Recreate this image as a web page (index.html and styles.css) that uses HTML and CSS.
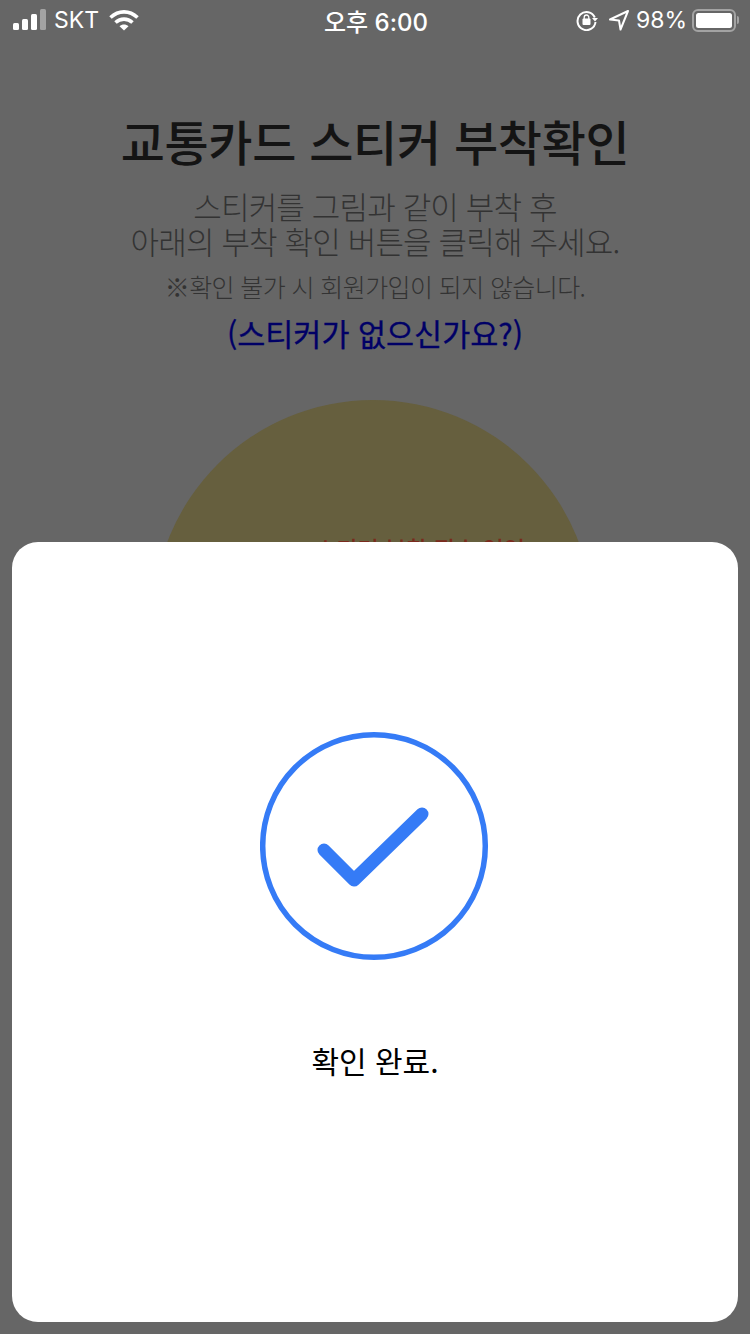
FILE: index.html
```html
<!DOCTYPE html>
<html lang="ko">
<head>
<meta charset="utf-8">
<title>교통카드 스티커 부착확인</title>
<link rel="stylesheet" href="styles.css">
</head>
<body>
<div class="status">
  <div class="status-side">
    <svg class="signal" width="34" height="22" viewBox="0 0 34 22"><rect x="0" y="14" width="6" height="7" rx="1.500" fill="#fff"/><rect x="9" y="10" width="6" height="11" rx="1.500" fill="#fff"/><rect x="18" y="5" width="6" height="16" rx="1.500" fill="#fff"/><rect x="27" y="0" width="6" height="21" rx="1.500" fill="#a3a3a3"/></svg>
    <span class="carrier">SKT</span>
    <svg class="wifi" width="30" height="22" viewBox="0 0 30 22"><path d="M1.500 8.500C9.500 1 20.500 1 28.500 8.500" fill="none" stroke="#fff" stroke-width="3.600"/><path d="M6.500 13.500C11.500 9 18.500 9 23.500 13.500" fill="none" stroke="#fff" stroke-width="3.600"/><path d="M10.500 17.300C13 15 17 15 19.500 17.300L15 21.500Z" fill="#fff"/></svg>
  </div>
  <div class="time">오후 6:00</div>
  <div class="status-side right">
    <svg class="lock" width="22" height="22" viewBox="0 0 22 22"><path d="M18.800 8.500A9 9 0 1 0 19.500 13" fill="none" stroke="#fff" stroke-width="2"/><path d="M16 9h6l-3 3.500z" fill="#fff"/><rect x="6.500" y="9.500" width="8" height="6.500" rx="1" fill="#fff"/><path d="M8.200 10V8.300a2.300 2.300 0 0 1 4.600 0V10" fill="none" stroke="#fff" stroke-width="1.300"/></svg>
    <svg class="loc" width="22" height="22" viewBox="0 0 22 22"><path d="M20 2 2 10.500l9 1 1.500 9z" fill="none" stroke="#fff" stroke-width="2" stroke-linejoin="round"/></svg>
    <span class="pct">98%</span>
    <div class="battery"><div class="battery-fill"></div></div>
    <div class="battery-cap"></div>
  </div>
</div>
<main class="page">
  <h1 class="title">교통카드 스티커 부착확인</h1>
  <p class="lead">스티커를 그림과 같이 부착 후<br>아래의 부착 확인 버튼을 클릭해 주세요.</p>
  <p class="note">※확인 불가 시 회원가입이 되지 않습니다.</p>
  <p class="link">(스티커가 없으신가요?)</p>
  <div class="disc"><span class="disc-label">스티커 부착 필수 영역</span></div>
</main>
<section class="sheet">
  <svg class="check" width="230" height="230" viewBox="0 0 230 230"><circle cx="114" cy="115" r="111.300" fill="none" stroke="#357bf6" stroke-width="5.500"/><path d="M64 119 94 149 162 83" fill="none" stroke="#357bf6" stroke-width="13" stroke-linecap="round" stroke-linejoin="round"/></svg>
  <p class="done">확인 완료.</p>
</section>
</body>
</html>
```
FILE: styles.css
```css
* { box-sizing: border-box; }
html, body { margin: 0; padding: 0; }
body {
  width: 750px;
  height: 1334px;
  overflow: hidden;
  position: relative;
  background: #666;
  font-family: "Noto Sans CJK KR", "Noto Sans", sans-serif;
}
.status {
  height: 40px;
  display: flex;
  align-items: center;
  justify-content: space-between;
  padding: 0 11px 0 13px;
  color: #fff;
  position: relative;
}
.status-side { display: flex; align-items: center; width: 250px; }
.status-side.right { justify-content: flex-end; }
.carrier { font: 400 23px Inter, "Liberation Sans", sans-serif; margin-left: 7px; }
.wifi { margin-left: 10px; }
.time { font: 500 24px Inter, "Noto Sans CJK KR", sans-serif; }
.loc { margin-left: 10px; }
.pct { font: 400 23px Inter, "Liberation Sans", sans-serif; margin-left: 6px; }
.battery {
  width: 44px;
  height: 23px;
  margin-left: 5px;
  border: 2px solid #a3a3a3;
  border-radius: 6px;
  padding: 2px;
}
.battery-fill { width: 100%; height: 100%; background: #fff; border-radius: 2.500px; }
.battery-cap { width: 2px; height: 8px; margin-left: 1px; background: #a3a3a3; border-radius: 0 2px 2px 0; }
.page { display: flex; flex-direction: column; align-items: center; padding-top: 70px; }
.title { margin: 0; font-size: 48px; font-weight: 500; line-height: 60px; letter-spacing: -0.3px; color: #141414; }
.lead { margin: 18px 0 0; font-size: 31px; font-weight: 300; line-height: 35px; letter-spacing: -0.85px; color: #333; text-align: center; }
.note { margin: 10px 0 0; font-size: 25px; font-weight: 300; line-height: 36px; letter-spacing: -0.6px; color: #333; }
.link { margin: 7px 0 0; font-size: 30.500px; font-weight: 400; line-height: 44px; -webkit-text-stroke: 0.3px #000066; color: #000066; }
.disc {
  width: 440px;
  height: 440px;
  margin-top: 45px;
  margin-right: 4px;
  border-radius: 50%;
  background: #665f3e;
  display: flex;
  justify-content: center;
  padding: 133px 0 0 94px;
}
.disc-label { font-size: 23px; font-weight: 500; color: #7a2a1c; line-height: 30px; }
.sheet {
  position: absolute;
  left: 12px;
  top: 542px;
  width: 726px;
  height: 780px;
  background: #fff;
  border-radius: 26px;
  display: flex;
  flex-direction: column;
  align-items: center;
  padding-top: 189px;
}
.check { display: block; }
.done { margin: 77px 0 0; font-size: 30px; font-weight: 400; line-height: 44px; color: #000; }
```
